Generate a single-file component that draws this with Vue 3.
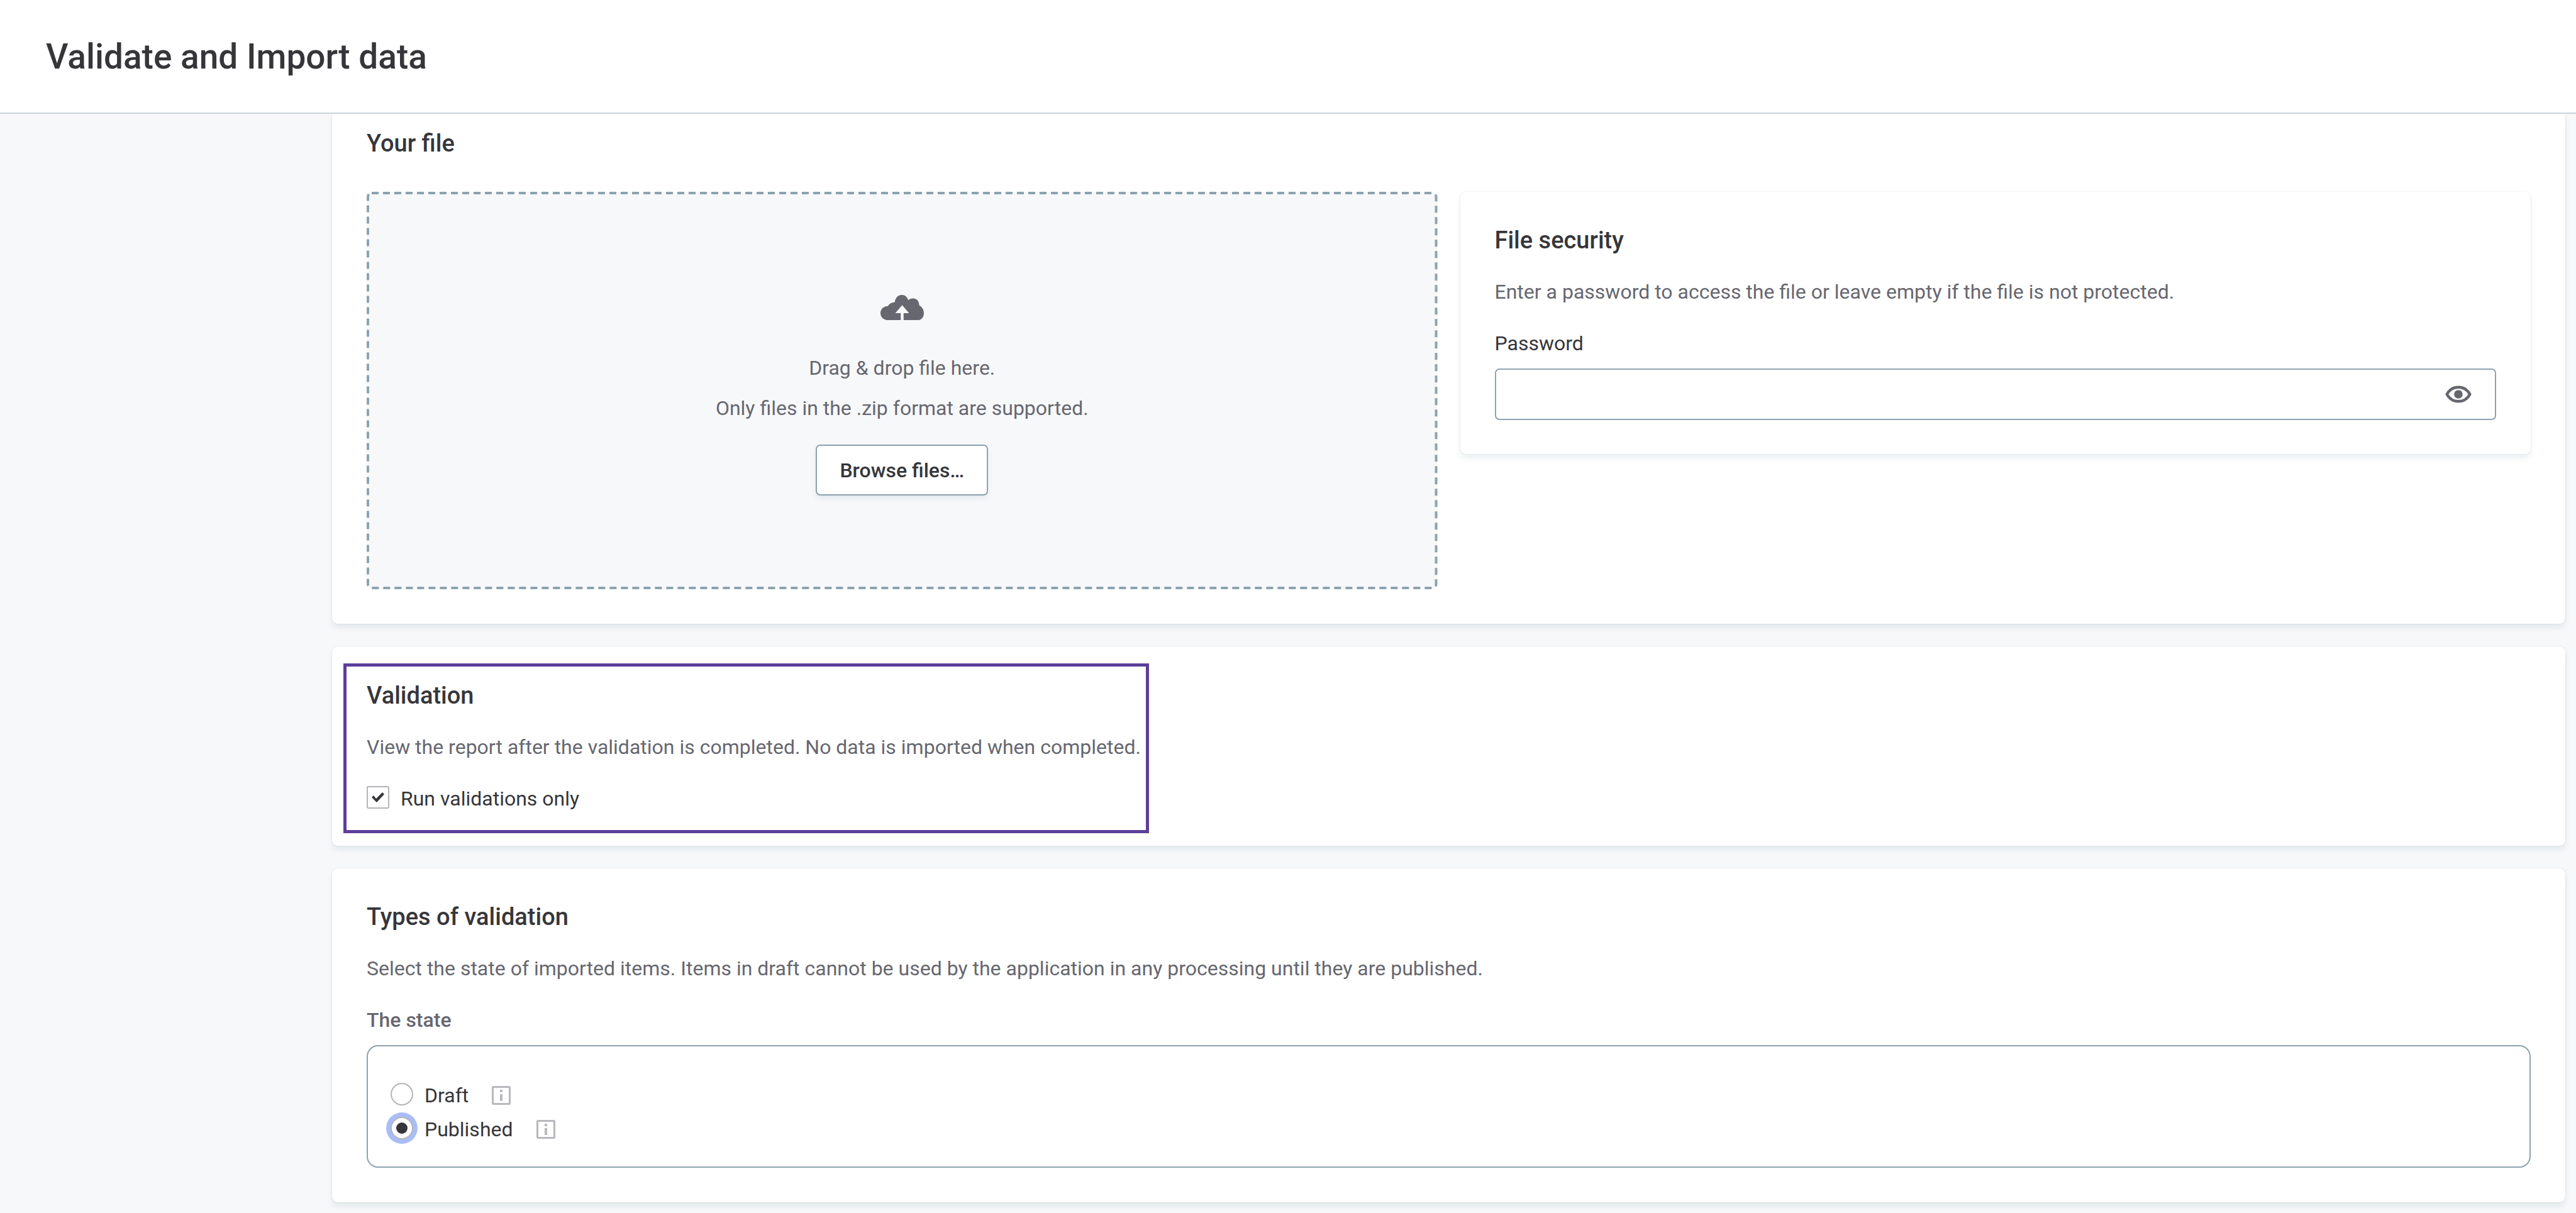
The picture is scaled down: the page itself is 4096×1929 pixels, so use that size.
<script setup>
import { ref } from 'vue'

const password = ref('')
const showPassword = ref(false)
const validationsOnly = ref(true)
const state = ref('published')
const states = [
  { value: 'draft', label: 'Draft' },
  { value: 'published', label: 'Published' },
]
</script>

<template>
  <div class="page">
    <header class="header">
      <h1 class="title">Validate and Import data</h1>
    </header>

    <main class="content">
      <section class="card card-file">
        <h2 class="heading">Your file</h2>
        <div class="columns">
          <div class="dropzone">
            <svg class="dropzone-outline" aria-hidden="true">
              <rect x="2" y="2" rx="6" />
            </svg>
            <svg class="cloud" viewBox="0 0 76 44" aria-hidden="true">
              <path
                fill-rule="evenodd"
                d="M11 44C4 43 0 38 0 32C0 25 5 20 13 19.500C15 15.500 19 13 25 12.500C26 5 31 0 37.500 0C43 0 47 3.500 48.500 9C51 7 54 6 57 6C63.500 6 68 11 68 18.500C73 21 76 26 76 32C76 38 73 42.500 68 44H40.500V32H50L38 18L26 32H35.500V44Z"
              />
            </svg>
            <p class="text">Drag &amp; drop file here.</p>
            <p class="text">Only files in the .zip format are supported.</p>
            <button type="button" class="browse">Browse files…</button>
          </div>

          <section class="card card-security">
            <h2 class="heading">File security</h2>
            <p class="text">Enter a password to access the file or leave empty if the file is not protected.</p>
            <div class="field">
              <label class="label" for="password">Password</label>
              <div class="password">
                <input
                  id="password"
                  v-model="password"
                  class="password-input"
                  :type="showPassword ? 'text' : 'password'"
                />
                <button
                  type="button"
                  class="reveal"
                  aria-label="Show password"
                  @click="showPassword = !showPassword"
                >
                  <svg class="eye" viewBox="0 0 46 30" aria-hidden="true">
                    <path d="M3 15C12-1.500 34-1.500 43 15C34 31.500 12 31.500 3 15Z" />
                    <circle cx="23" cy="15" r="7.500" />
                  </svg>
                </button>
              </div>
            </div>
          </section>
        </div>
      </section>

      <section class="card card-validation">
        <div class="highlight">
          <h2 class="heading">Validation</h2>
          <p class="text">View the report after the validation is completed. No data is imported when completed.</p>
          <label class="option">
            <input v-model="validationsOnly" type="checkbox" class="mark checkbox" />
            Run validations only
          </label>
        </div>
      </section>

      <section class="card card-types">
        <h2 class="heading">Types of validation</h2>
        <p class="text">
          Select the state of imported items. Items in draft cannot be used by the application in any processing until
          they are published.
        </p>
        <div class="field">
          <p id="state-label" class="text text-strong">The state</p>
          <div class="states" role="radiogroup" aria-labelledby="state-label">
            <div v-for="item in states" :key="item.value" class="state-row">
              <label class="option">
                <input v-model="state" type="radio" name="state" class="mark radio" :value="item.value" />
                {{ item.label }}
              </label>
              <svg class="info" viewBox="0 0 30 30" aria-hidden="true">
                <rect x="1.500" y="1.500" width="27" height="27" rx="1" />
                <path d="M15 13V24M15 6V10" />
              </svg>
            </div>
          </div>
        </div>
      </section>
    </main>
  </div>
</template>

<style>
body {
  margin: 0;
  background: #f7f8fa;
}
</style>

<style scoped>
.page {
  min-height: 100vh;
  background: #f7f8fa;
  color: #36363a;
  font-family: Roboto, 'Liberation Sans', sans-serif;
  font-size: 32px;
  line-height: 46px;
}

.page *,
.page *::before {
  box-sizing: border-box;
}

.header {
  position: relative;
  z-index: 1;
  padding: 60px 73px 59px;
  border-bottom: 2px solid #c8d3da;
  background: #fff;
}

.title,
.heading,
.text {
  margin: 0;
}

.title {
  font-size: 55px;
  font-weight: 500;
  line-height: 60px;
}

.heading {
  font-size: 38px;
  font-weight: 500;
}

.text {
  color: #67676f;
}

.text-strong {
  font-weight: 500;
}

.content {
  display: flex;
  flex-direction: column;
  gap: 36px;
  padding: 0 17px 16px 528px;
}

.card {
  display: flex;
  flex-direction: column;
  gap: 36px;
  padding: 54px 55px 55px;
  border-radius: 9px;
  background: #fff;
  box-shadow: 0 0 2px rgba(40, 60, 75, 0.18), 0 7px 10px rgba(20, 80, 85, 0.08);
}

.card-file {
  gap: 54px;
  padding-top: 24px;
  border-radius: 0 0 9px 9px;
}

.columns {
  display: grid;
  grid-template-columns: 1fr 1fr;
  gap: 36px;
  align-items: start;
}

.dropzone {
  position: relative;
  display: flex;
  flex-direction: column;
  align-items: center;
  gap: 18px;
  padding: 164px 55px 149px;
  border-radius: 9px;
  background: #f7f8fa;
}

.dropzone-outline {
  position: absolute;
  inset: 0;
  width: 100%;
  height: 100%;
}

.dropzone-outline rect {
  width: calc(100% - 4px);
  height: calc(100% - 4px);
  fill: none;
  stroke: #8ca3b0;
  stroke-width: 4;
  stroke-dasharray: 11 7;
}

.cloud {
  width: 69px;
  height: 40px;
  margin-bottom: 35px;
  fill: #676770;
}

.browse {
  height: 81px;
  margin-top: 17px;
  padding: 0 36px;
  border: 2px solid #8ca3b0;
  border-radius: 7px;
  background: #fff;
  box-shadow: 0 5px 9px rgba(20, 80, 85, 0.08);
  color: #36363a;
  font: inherit;
  font-weight: 500;
}

.card-security {
  padding-bottom: 54px;
}

.field {
  display: flex;
  flex-direction: column;
  gap: 17px;
}

.password {
  display: flex;
  height: 82px;
  border: 2px solid #8ca3b0;
  border-radius: 7px;
}

.password-input {
  flex: 1;
  min-width: 0;
  padding: 0 24px;
  border: 0;
  outline: 0;
  background: transparent;
  color: inherit;
  font: inherit;
}

.reveal {
  display: flex;
  align-items: center;
  padding: 0 37px;
  border: 0;
  background: transparent;
}

.eye {
  width: 42px;
  height: 28px;
}

.eye path {
  fill: none;
  stroke: #676770;
  stroke-width: 5;
}

.eye circle {
  fill: #676770;
}

.card-validation {
  padding: 27px 18px 20px;
}

.highlight {
  display: flex;
  flex-direction: column;
  gap: 36px;
  width: fit-content;
  padding: 23px 8px 27px 32px;
  border: 5px solid #5b3f99;
}

.option {
  display: flex;
  align-items: center;
  gap: 18px;
}

.mark {
  display: grid;
  place-items: center;
  flex: none;
  width: 36px;
  height: 36px;
  margin: 0 0 4px;
  border: 2px solid #b5b5ba;
  background: #fff;
  appearance: none;
}

.checkbox {
  border-radius: 3px;
}

.checkbox:checked::before {
  width: 20px;
  height: 16px;
  background: #36363a;
  clip-path: polygon(0 8px, 3px 5px, 7px 10px, 17px 0, 20px 3px, 8px 16px);
  content: '';
}

.radio {
  border-radius: 50%;
}

.radio:checked {
  box-shadow: 0 0 0 7px #a9bdf8;
}

.radio:checked::before {
  width: 18px;
  height: 18px;
  border-radius: 50%;
  background: #36363a;
  content: '';
}

.states {
  padding: 51px 36px 32px;
  border: 2px solid #8ca3b0;
  border-radius: 18px;
}

.state-row {
  display: flex;
  align-items: center;
  gap: 37px;
  height: 54px;
}

.info {
  width: 30px;
  height: 30px;
  fill: none;
  stroke: #b8b8be;
  stroke-width: 3;
}

.info path {
  stroke-width: 4;
}
</style>
